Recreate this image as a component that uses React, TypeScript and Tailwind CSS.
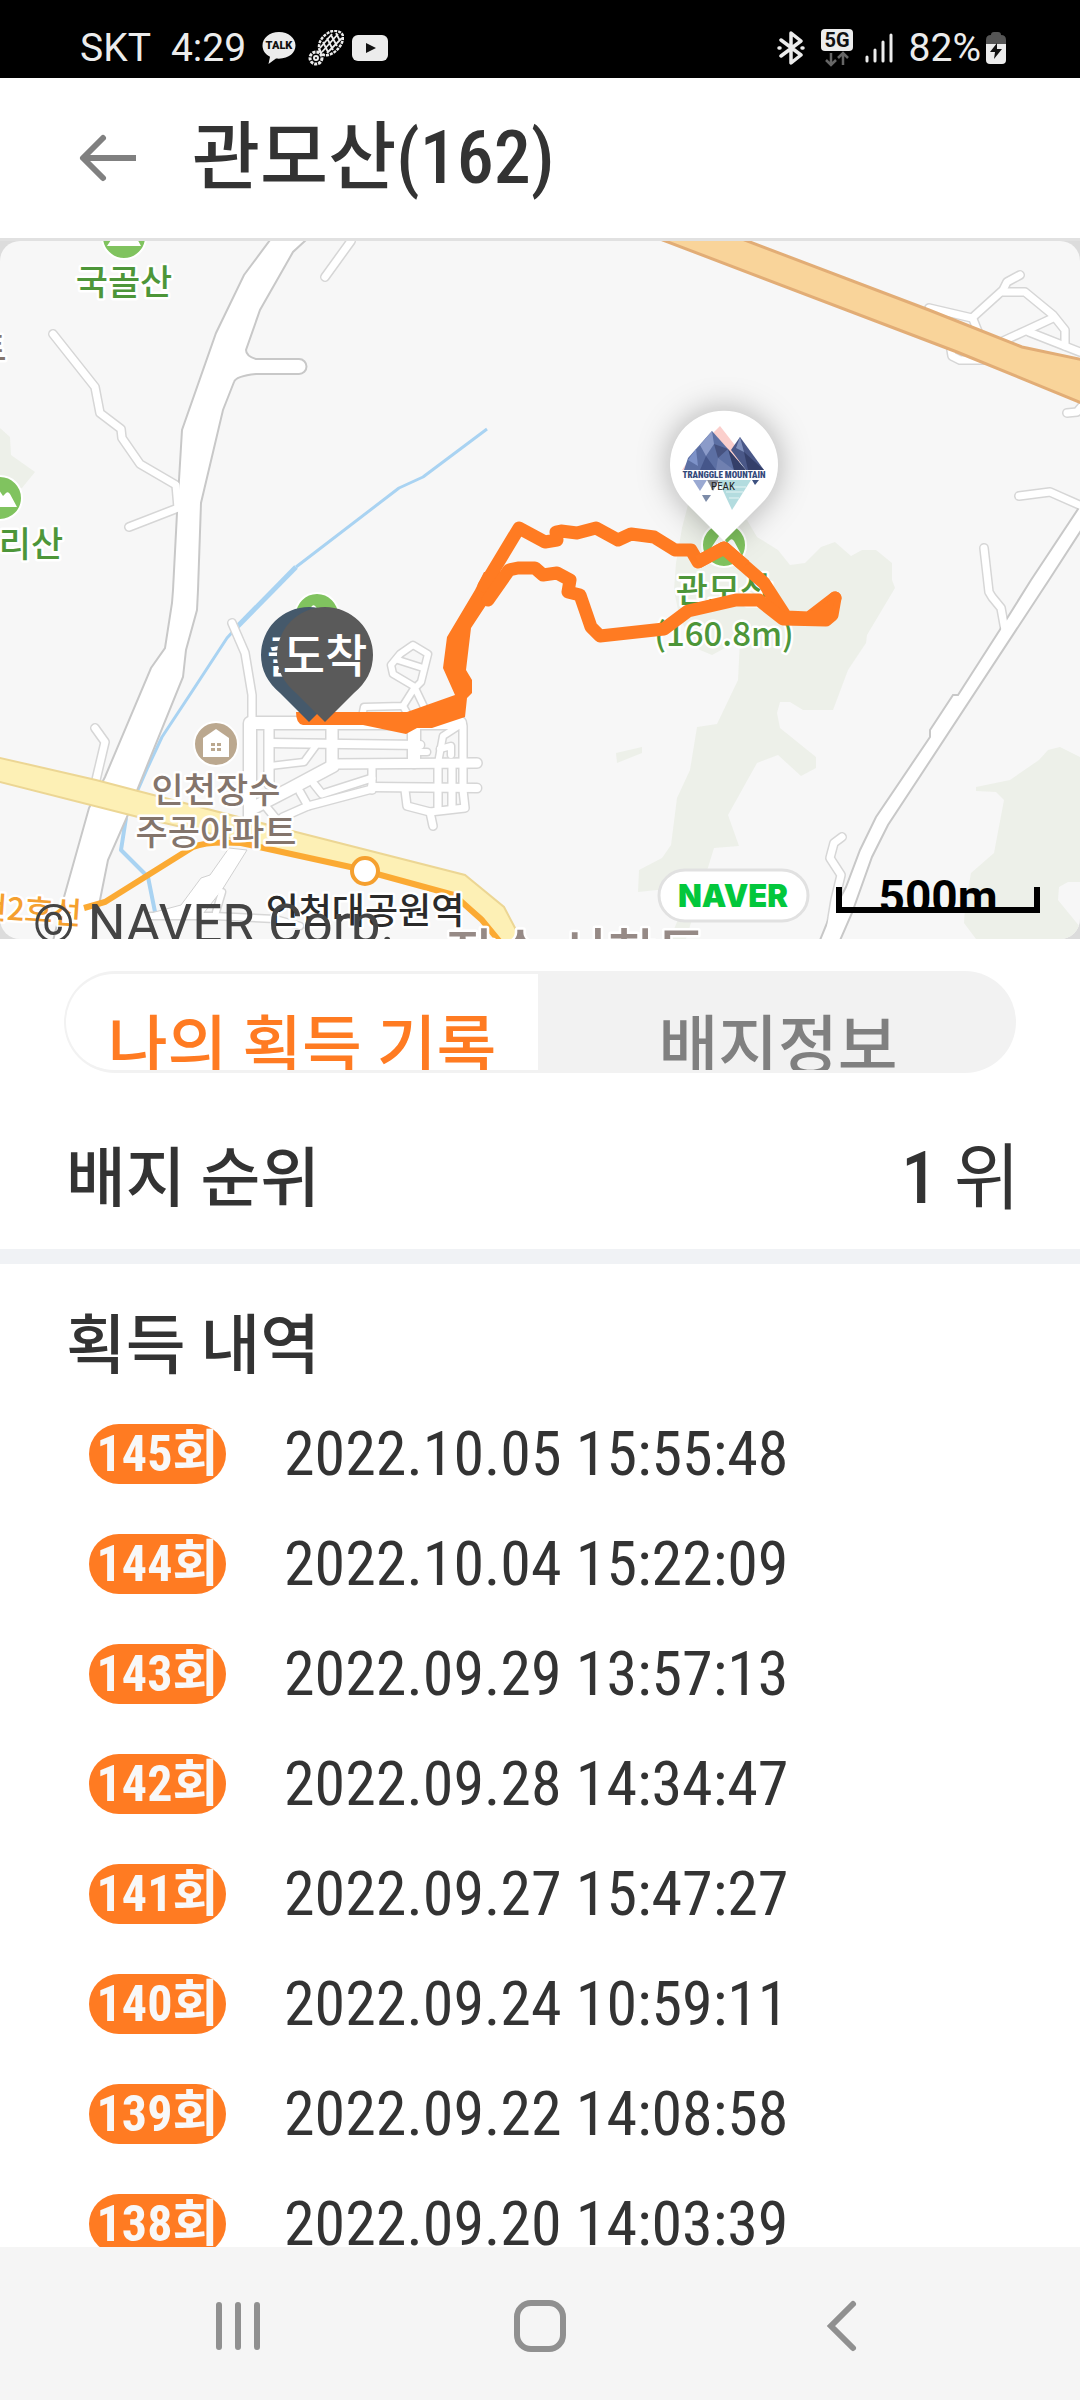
import { useState } from "react"
import type { ReactNode } from "react"

const ORANGE = "#ff7b22"
const KR = "'Noto Sans CJK KR', sans-serif"

const records = [
  { count: 145, date: "2022.10.05 15:55:48" },
  { count: 144, date: "2022.10.04 15:22:09" },
  { count: 143, date: "2022.09.29 13:57:13" },
  { count: 142, date: "2022.09.28 14:34:47" },
  { count: 141, date: "2022.09.27 15:47:27" },
  { count: 140, date: "2022.09.24 10:59:11" },
  { count: 139, date: "2022.09.22 14:08:58" },
  { count: 138, date: "2022.09.20 14:03:39" },
]

// narrow streets, drawn as a grey casing with a white core
const streets: { w: number; d: string }[] = [
  { w: 7, d: "M53 334L95 387L100 413L121 429L122 438L140 464L176 485L178 508L129 527" },
  { w: 7, d: "M351 241L325 277" },
  { w: 7, d: "M929 308L972 318L1003 290L1007 282L1020 275" },
  { w: 7, d: "M1003 292L1025 292L1053 315L1065 330L1065 346" },
  { w: 7, d: "M1053 318L1025 331L1001 342" },
  { w: 7, d: "M1029 332L1080 352" },
  { w: 7, d: "M973 319L979 334" },
  { w: 7, d: "M951 350L952 356L960 360L990 360" },
  { w: 7, d: "M1067 413L1077 412L1082 406" },
  { w: 7, d: "M1019 496L1050 492L1084 507" },
  { w: 7, d: "M984 548L989 592L992 597L1001 608L1005 630" },
  { w: 7, d: "M842 837L834 843L830 858L841 875L835 900L830 930" },
  { w: 7, d: "M95 728L105 742L96 780" },
  { w: 7, d: "M232 623L245 653L252 695L252 722" },
  { w: 6, d: "M151 916L214 916L275 919L300 926" },
  { w: 6, d: "M222 892L216 912" },
  { w: 12, d: "M251 723L460 723" },
  { w: 12, d: "M250 723L250 820" },
  { w: 9, d: "M269 728L269 784" },
  { w: 8, d: "M270 743L420 745" },
  { w: 11, d: "M332 727L332 763" },
  { w: 6, d: "M315 747L304 762L270 766" },
  { w: 9, d: "M333 764L477 763" },
  { w: 12, d: "M333 766L288 790L253 808" },
  { w: 7, d: "M314 784L322 794L372 778" },
  { w: 7, d: "M372 768L372 790" },
  { w: 8, d: "M372 787L477 788" },
  { w: 7, d: "M372 789L308 806L283 817" },
  { w: 7, d: "M300 792L308 806" },
  { w: 7, d: "M263 803L277 820" },
  { w: 12, d: "M414 727L414 762" },
  { w: 6, d: "M414 752L427 752" },
  { w: 7, d: "M463 726L463 790L465 808L430 812L407 806L405 790" },
  { w: 7, d: "M430 812L433 826" },
  { w: 7, d: "M438 763L438 810" },
  { w: 7, d: "M452 763L452 808" },
  { w: 6, d: "M460 725L443 736L438 763" },
  { w: 6, d: "M440 749L451 746L451 755" },
  { w: 6, d: "M362 717L364 707L403 706L415 687L393 674L391 665L400 654L413 645L428 654L421 682L415 688L425 709" },
  { w: 6, d: "M398 660L423 668" },
  { w: 6, d: "M403 706L412 722" },
]

const parkAreas = [
  "M0 428L10 437L11 455L35 472L22 488L0 492Z",
  "M688 505L747 520L757 537L778 550L790 565L805 563L821 547L835 542L851 556L862 550L876 550L892 563L892 580L895 588L867 635L866 643L848 670L833 710L803 710L790 702L780 702L777 713L780 728L816 757L816 768L801 776L778 755L757 763L728 815L739 846L714 848L690 926L686 939L670 939L690 890L657 890L638 892L639 870L662 858L671 845L677 798L690 770L697 727L717 724L738 680L740 640L712 655L700 650L680 620L674 590L676 563L682 528Z",
  "M616 753L642 747L642 753L617 763Z",
  "M976 787L1010 780L1039 760L1048 750L1060 747L1080 757L1080 882L1068 882L1059 887L1058 900L1080 927L1080 939L976 939L964 923L965 907L971 873L994 853L1004 800L996 792L976 791Z",
]

const MAIN_ROAD =
  "M273 236L244 275L216 333L182 430L179 480L177 513L173 590L172 603L165 648L151 668L105 777L89 808L64 897L52 945L91 945L100 900L108 860L127 817L138 788L183 677L186 650L197 610L198 590L201 503L223 410L234 382Q236 376 256 374L299 374A7 7 0 0 0 299 359L256 359Q246 356 246 350L260 310L293 252L306 240Z"

const EAST_ROAD =
  "M1084 500L1031 580L1001 628L958 695L953 695L930 730L930 737L876 817L860 850L846 887L827 923L818 945L838 945L852 913L872 857L888 825L1049 580L1084 526Z"

function MapLabel({ x, y, color, size = 34, children }: { x: number; y: number; color: string; size?: number; children: ReactNode }) {
  return (
    <text
      x={x}
      y={y}
      fontSize={size}
      fontWeight={500}
      fontFamily={KR}
      fill={color}
      stroke="#ffffff"
      strokeWidth={5}
      strokeLinejoin="round"
      paintOrder="stroke"
      textAnchor="middle"
    >
      {children}
    </text>
  )
}

function MountainMarker({ x, y }: { x: number; y: number }) {
  return (
    <g transform={`translate(${x} ${y})`}>
      <circle r="22" fill="#80c35f" stroke="#ffffff" strokeWidth="2" />
      <path d="M-17 9L-5 -9Q-3 -11 -1 -8L3 -2L6 -5Q8 -7 10 -4L17 9Z" fill="#ffffff" />
    </g>
  )
}

function RoutePin({ x, color, label }: { x: number; color: string; label: string }) {
  return (
    <g transform={`translate(${x} 655)`}>
      <path d="M0 67L-29 38Q-48 22 -48 0A48 48 0 0 1 48 0Q48 22 29 38Z" fill={color} />
      <text y="17" fontSize="46" fontWeight={500} fontFamily={KR} fill="#ffffff" textAnchor="middle">
        {label}
      </text>
    </g>
  )
}

function PeakPin() {
  return (
    <g>
      <path
        d="M724 541L687 504A54 54 0 1 1 761 504Z"
        fill="#ffffff"
        className="drop-shadow-[0_0_16px_rgba(0,0,0,0.3)]"
      />
      <path d="M712 434L720 426L748 462L738 462L716 436Z" fill="#fbcfcc" />
      <path d="M682 470L690 458L694 470Z" fill="#fbcfcc" />
      <path d="M712 431L688 458L684 470H745L728 449Z" fill="#5c6fa3" />
      <path d="M740 437L731 450L746 470H764Z" fill="#4a5888" />
      <path d="M712 431L700 445L706 456L714 444Z" fill="#8b9bc9" />
      <path d="M696 449L688 460L698 466Z" fill="#7d92c8" />
      <path d="M706 456L700 470H716Z" fill="#45568a" />
      <path d="M714 444L718 458L728 449Z" fill="#46527f" />
      <path d="M718 458L716 470H734Z" fill="#7080b0" />
      <path d="M728 449L734 470H746Z" fill="#343f69" />
      <path d="M740 437L736 448L744 452Z" fill="#8090bd" />
      <path d="M744 452L748 470H764Z" fill="#343f69" />
      <path d="M693 480H707L700 491Z" fill="#9aa9d2" />
      <path d="M707 480H719L713 491Z" fill="#8a8f9c" />
      <path d="M718 480H751L732 510Z" fill="#b3dcdf" />
      <path d="M722 487H746M726 492H743M729 498H739" stroke="#e4f4f4" strokeWidth="1" />
      <path d="M702 495H711L706 502Z" fill="#7c8ba8" />
      <path d="M752 480H759L755 485Z" fill="#3d5180" />
      <text
        x="724"
        y="478"
        fontSize="9"
        fontWeight={900}
        fontFamily="'Roboto Condensed', Roboto, sans-serif"
        fill="#33497a"
        stroke="#ffffff"
        strokeWidth="1"
        paintOrder="stroke"
        textAnchor="middle"
      >
        TRANGGLE MOUNTAIN
      </text>
      <text x="723" y="490" fontSize="11" fontFamily="'Roboto Condensed', Roboto, sans-serif" fill="#222222" textAnchor="middle">
        PEAK
      </text>
    </g>
  )
}

function TrackMap() {
  return (
    <section className="border-t-3 border-[#e1e1e1] bg-[#dcdcdc]">
      <svg viewBox="0 241 1080 698" className="block h-auto w-full rounded-[20px] bg-[#f7f7f7]" role="img" aria-label="관모산 지도">
        {parkAreas.map((d) => (
          <path key={d} d={d} fill="#edf0e9" />
        ))}

        <g fill="none" stroke="#a9d3f2" strokeLinejoin="round">
          <path d="M487 429L423 477L399 488L296 567" strokeWidth="3" />
          <path d="M296 567L237 627" strokeWidth="5" />
          <path d="M237 627L227 638L193 690L162 737L148 767L138 790" strokeWidth="3" />
          <path d="M126 818L121 850L148 877L155 912" strokeWidth="4" />
        </g>

        <g fill="none" stroke="#d6d6d6" strokeLinecap="round" strokeLinejoin="round">
          {streets.map((s) => (
            <path key={s.d} d={s.d} strokeWidth={s.w + 3} />
          ))}
        </g>
        <path d="M229 848L210 875L201 878L181 905L151 913L151 918L203 914L222 890L247 850Z" fill="#ffffff" stroke="#d0d0d0" />
        <path d={MAIN_ROAD} fill="#ffffff" stroke="#c8c8c8" strokeWidth="2" />
        <path d={EAST_ROAD} fill="#ffffff" stroke="#c8c8c8" strokeWidth="2" />
        <g fill="none" stroke="#ffffff" strokeLinecap="round" strokeLinejoin="round">
          {streets.map((s) => (
            <path key={s.d} d={s.d} strokeWidth={s.w} />
          ))}
        </g>

        <path
          d="M-4 757L96 780L138 791L296 832L465 875L504 907L524 945L499 945L482 917L454 895L362 870L269 847L138 817L-4 781Z"
          fill="#fdf0b5"
          stroke="#ecd694"
          strokeWidth="2"
        />
        <path
          d="M660 239L957 352L1084 404L1084 360L1022 347L929 310L742 239Z"
          fill="#f9d49a"
          stroke="#e2ad76"
          strokeWidth="3"
        />
        <path
          d="M84 908L105 902L193 847Q207 841 241 843L355 868L454 895L482 920L500 942"
          fill="none"
          stroke="#fbaa33"
          strokeWidth="6"
        />
        <circle cx="365" cy="871" r="13" fill="#ffffff" stroke="#f5a02f" strokeWidth="4" />

        <MountainMarker x={124} y={237} />
        <MountainMarker x={0} y={498} />
        <MountainMarker x={317} y={615} />
        <MountainMarker x={724} y={545} />
        <circle cx="216" cy="744" r="22" fill="#bba88f" stroke="#ffffff" strokeWidth="2" />
        <path d="M216 729L229 738V757H203V738Z" fill="#ffffff" />
        <path d="M211 743h4v3h-4zM217 743h4v3h-4zM211 748h4v3h-4zM217 748h4v3h-4z" fill="#bba88f" />

        <MapLabel x={124} y={295} color="#4d9639" size={35}>국골산</MapLabel>
        <MapLabel x={31} y={557} color="#4d9639" size={35}>리산</MapLabel>
        <MapLabel x={724} y={603} color="#4d9639" size={35}>관모산</MapLabel>
        <MapLabel x={724} y={646} color="#4d9639" size={33}>(160.8m)</MapLabel>
        <MapLabel x={-9} y={361} color="#84756c">트</MapLabel>
        <MapLabel x={216} y={803} color="#84756c" size={35}>인천장수</MapLabel>
        <MapLabel x={216} y={845} color="#84756c" size={35}>주공아파트</MapLabel>
        <MapLabel x={365} y={924} color="#2b2b2b" size={36}>인천대공원역</MapLabel>
        <MapLabel x={576} y={974} color="#968a86" size={54}>장수 서창동</MapLabel>
        <g transform="rotate(4 40 922)">
          <MapLabel x={15} y={922} color="#f5a02f" size={31}>인천2호선</MapLabel>
        </g>

        <path
          d="M303 712H407L455 695L443 668L447 637L475 590L484 572L508 572L496 590L471 628L466 670L472 680V693L467 698L465 717L432 728H417L406 734L363 725H303Q296 724 296 712Z"
          fill={ORANGE}
        />
        <g fill="none" stroke={ORANGE} strokeWidth="13" strokeLinejoin="round" strokeLinecap="round">
          <path d="M484 586L519 528L545 542L557 540L556 532L561 531L577 533L596 528L618 540L631 534L654 537L675 550L691 550L698 562L724 548L764 583L786 617L809 618L835 598" />
          <path d="M488 600L509 570L518 568L535 568L543 575L557 573L570 580L568 592L580 595L591 627L600 636L664 629L688 611L736 600L759 600L783 619L826 620L832 615L835 598" />
        </g>
        <path d="M809 612L835 598L830 620H800Z" fill={ORANGE} />

        <RoutePin x={309} color="#45596b" label="출발" />
        <RoutePin x={325} color="#5a5a5a" label="도착" />
        <PeakPin />
        <path d="M698 562L724 548L745 566" fill="none" stroke={ORANGE} strokeWidth="13" strokeLinejoin="round" />

        <text x="33" y="942" fontSize="53" fontFamily="Roboto, sans-serif" fill="#444444">
          © NAVER Corp.
        </text>
        <rect x="659" y="870" width="149" height="51" rx="26" fill="#ffffff" stroke="#e1e1e1" strokeWidth="3" />
        <text x="733" y="907" fontSize="31" fontWeight={900} fontFamily="Inter, sans-serif" fill="#03c73c" textAnchor="middle">
          NAVER
        </text>
        <text x="938" y="913" fontSize="46" fontWeight={700} fontFamily="Roboto, sans-serif" fill="#000000" textAnchor="middle">
          500m
        </text>
        <path d="M839 887V910H1037V887" fill="none" stroke="#000000" strokeWidth="6" />
      </svg>
    </section>
  )
}

function StatusBar() {
  return (
    <div className="flex h-[78px] items-center justify-between bg-black pt-[18px] pr-[73px] pl-20 font-[Roboto,sans-serif] text-[39px] leading-none text-[#ececec]">
      <div className="flex items-center">
        <span>SKT</span>
        <span className="ml-5">4:29</span>
        <svg viewBox="0 0 34 34" className="ml-4 size-[34px]" aria-hidden="true">
          <path d="M17 1C7.500 1 .5 7 .5 14.500C.5 19.500 3.500 23.500 8 25.700L6.500 33L14 27.500C26 28.700 33.500 22 33.500 14.500S26.500 1 17 1Z" fill="#ececec" />
          <text x="17" y="18" fontSize="11" fontWeight={900} fontFamily="Roboto, sans-serif" fill="#111" textAnchor="middle">
            TALK
          </text>
        </svg>
        <svg viewBox="0 0 36 36" className="ml-3 size-9" aria-hidden="true">
          <g fill="none" stroke="#ececec">
            <path d="M12 21C9 15 13 7 20 3C26 -1 34 1 35 6C36 13 29 23 20 25C16 26 13 24 12 21Z" strokeWidth="2.500" strokeDasharray="3 1" />
            <path d="M15 12L20 22M19 8L25 20M23 5L29 16M28 3L32 11M12 18L24 4M14 22L30 4M19 23L34 8" strokeWidth="1.800" />
            <circle cx="8" cy="28" r="6" strokeWidth="3" strokeDasharray="3 1" />
            <circle cx="8" cy="28" r="2" strokeWidth="2" />
          </g>
        </svg>
        <svg viewBox="0 0 36 26" className="ml-2 h-[26px] w-9" aria-hidden="true">
          <rect width="36" height="26" rx="6" fill="#ececec" />
          <path d="M14 8L24 13L14 18Z" fill="#111" />
        </svg>
      </div>
      <div className="flex items-center">
        <svg viewBox="0 0 28 34" className="h-[34px] w-7" fill="none" stroke="#ececec" strokeWidth="3.500" strokeLinecap="round" strokeLinejoin="round" aria-hidden="true">
          <path d="M4 9L24 24L14 32V2L24 10L4 25" />
          <path d="M2 17H3M25 17H26" />
        </svg>
        <svg viewBox="0 0 32 38" className="ml-4 h-[38px] w-8" aria-hidden="true">
          <rect width="32" height="22" rx="4" fill="#ececec" />
          <text x="16" y="18" fontSize="20" fontWeight={700} fontFamily="Roboto, sans-serif" fill="#111" textAnchor="middle">
            5G
          </text>
          <path d="M10 24V35M5 31L10 36L15 31M22 36V25M17 29L22 24L27 29" fill="none" stroke="#666666" strokeWidth="2.500" />
        </svg>
        <svg viewBox="0 0 28 30" className="ml-3 h-[30px] w-7" stroke="#ececec" strokeWidth="3" strokeLinecap="round" aria-hidden="true">
          <path d="M2 24V28M10 17V28M18 9V28M26 2V28" />
        </svg>
        <span className="ml-4">82%</span>
        <svg viewBox="0 0 22 34" className="ml-1 h-[34px] w-[22px]" aria-hidden="true">
          <path d="M6 4Q6 1 9 1H13Q16 1 16 4Q21 4 21 9V14H1V9Q1 4 6 4Z" fill="#555555" />
          <path d="M1 13H21V29Q21 33 17 33H5Q1 33 1 29Z" fill="#ececec" />
          <path d="M12 12L5 21H10L9 28L17 18H12Z" fill="#111" />
        </svg>
      </div>
    </div>
  )
}

function Header() {
  return (
    <header className="flex h-40 items-center bg-white pl-[78px]">
      <button type="button" aria-label="뒤로" className="text-[#808080]">
        <svg viewBox="0 0 60 50" className="h-[50px] w-[60px]" fill="none" stroke="currentColor" strokeWidth="6" strokeLinecap="round" strokeLinejoin="round">
          <path d="M25 5L5 25L25 45" />
          <path d="M5 25H58" strokeLinecap="butt" />
        </svg>
      </button>
      <h1 className="ml-[54px] text-[74px] leading-none font-medium">관모산(162)</h1>
    </header>
  )
}

function Tabs() {
  const [tab, setTab] = useState(0)
  const labels = ["나의 획득 기록", "배지정보"]

  return (
    <div className="mx-16 mt-8 flex h-[102px] overflow-hidden rounded-full bg-[#f2f2f2] py-[3px] pr-[6px] pl-[2px]" role="tablist">
      {labels.map((label, i) => (
        <button
          key={label}
          type="button"
          role="tab"
          aria-selected={tab === i}
          onClick={() => setTab(i)}
          className={`w-1/2 overflow-hidden pt-9 text-[65px] leading-[74px] font-medium whitespace-nowrap ${
            i === 0 ? "rounded-l-full" : "rounded-r-full pl-2"
          } ${tab === i ? "bg-white text-[#ff7b22]" : "text-[#808080]"}`}
        >
          {label}
        </button>
      ))}
    </div>
  )
}

function NavBar() {
  return (
    <nav className="grid h-[153px] shrink-0 grid-cols-3 bg-[#f5f5f5] px-[87px] pt-1 text-[#909090]">
      <button type="button" aria-label="최근 앱" className="flex items-center justify-center">
        <svg viewBox="0 0 56 56" className="size-14" stroke="currentColor" strokeWidth="6" strokeLinecap="round">
          <path d="M9 7V49M28 7V49M47 7V49" />
        </svg>
      </button>
      <button type="button" aria-label="홈" className="flex items-center justify-center">
        <svg viewBox="0 0 56 56" className="size-14" fill="none" stroke="currentColor" strokeWidth="6">
          <rect x="5" y="5" width="46" height="46" rx="14" />
        </svg>
      </button>
      <button type="button" aria-label="뒤로 가기" className="flex items-center justify-center">
        <svg viewBox="0 0 56 56" className="size-14" fill="none" stroke="currentColor" strokeWidth="6" strokeLinecap="round">
          <path d="M39 6L17 28L39 50" />
        </svg>
      </button>
    </nav>
  )
}

export default function App() {
  return (
    <div className="flex h-screen flex-col overflow-hidden bg-white font-['Roboto_Condensed','Roboto','Noto_Sans_CJK_KR',sans-serif] text-[#333333]">
      <StatusBar />
      <Header />
      <main className="min-h-0 flex-1 overflow-hidden">
        <TrackMap />
        <Tabs />

        <section className="flex h-44 items-center justify-between pt-9 pr-[60px] pl-[66px]">
          <h2 className="text-[65px] leading-none font-medium">배지 순위</h2>
          <p className="text-[72px] leading-none">
            <span className="font-medium">1</span> 위
          </p>
        </section>

        <section className="border-t-15 border-[#f0f2f5] pt-[50px]">
          <h2 className="px-[66px] text-[65px] leading-none font-medium">획득 내역</h2>
          <ul className="mt-5">
            {records.map((r) => (
              <li key={r.count} className="flex h-[110px] items-center pl-[89px]">
                <span className="flex h-[60px] w-[137px] items-center justify-center rounded-full bg-[#ff7b22] text-[50px] leading-none font-bold text-[#f8f8f8]">
                  {r.count}회
                </span>
                <time className="ml-[58px] text-[62px] leading-none">{r.date}</time>
              </li>
            ))}
          </ul>
        </section>
      </main>
      <NavBar />
    </div>
  )
}
